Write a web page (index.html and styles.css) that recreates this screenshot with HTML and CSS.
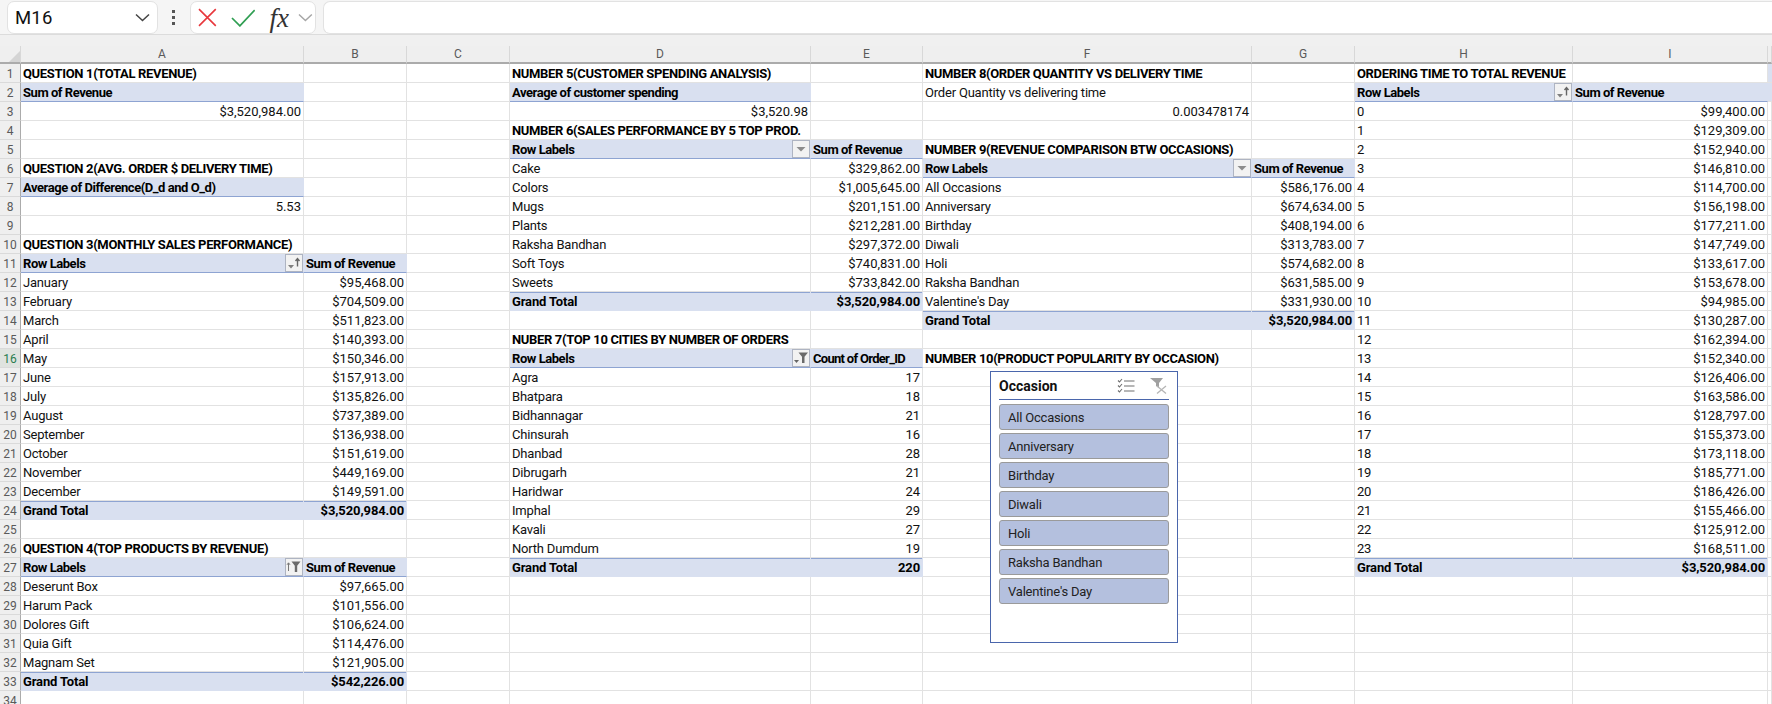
FILE: index.html
```html
<!DOCTYPE html>
<html lang="en">
<head>
    <meta charset="UTF-8">
    <title>Book1 - Excel</title>
    <link rel="stylesheet" href="styles.css">
</head>
<body>
    <svg class="sprites" width="0" height="0">
        <symbol id="i-sort" viewBox="0 0 18 18">
            <path d="M3 11h6l-3 3.5z" fill="#7f7f7f"/>
            <path d="M12.500 12.500V5M10.500 7l2-2.500 2 2.500" fill="none" stroke="#666" stroke-width="1.400"/>
        </symbol>
        <symbol id="i-sortup" viewBox="0 0 18 18">
            <path d="M3.500 13V5M2 6.800l1.500-2 1.500 2" fill="none" stroke="#777" stroke-width="1"/>
            <path d="M6.500 3.500h9l-3.300 4.200v6.300h-2.400V7.700z" fill="#6a6a6a"/>
        </symbol>
        <symbol id="i-filter" viewBox="0 0 18 18">
            <path d="M2 11h5l-2.500 3z" fill="#666"/>
            <path d="M6.500 3.500h9.500l-3.500 4.200v6.300h-2.500V7.700z" fill="#6a6a6a"/>
        </symbol>
        <symbol id="i-drop" viewBox="0 0 18 18">
            <path d="M4.500 7h9l-4.500 4.500z" fill="#8c8c8c"/>
        </symbol>
    </svg>

    <div class="toolbar">
        <div class="namebox">
            <span>M16</span>
            <svg width="15" height="9" viewBox="0 0 15 9"><path d="M1 1.500l6.500 6 6.500-6" fill="none" stroke="#444" stroke-width="1.500"/></svg>
        </div>
        <div class="dots"><i></i><i></i><i></i></div>
        <div class="fxbox">
            <svg width="19" height="19" viewBox="0 0 19 19"><path d="M1 1l17 17M18 1L1 18" stroke="#e8383d" stroke-width="1.600" fill="none"/></svg>
            <svg width="25" height="18" viewBox="0 0 25 18"><path d="M1 9l8 8L24 1" stroke="#2f9e52" stroke-width="1.700" fill="none"/></svg>
            <span class="fx">fx</span>
            <svg width="15" height="9" viewBox="0 0 15 9"><path d="M1 1.500l6.500 6 6.500-6" fill="none" stroke="#a6a6a6" stroke-width="1.500"/></svg>
        </div>
        <div class="formula"></div>
    </div>
    <div class="band"></div>

    <div class="sheet">
        <table class="grid">
            <colgroup>
                <col class="c-rh"><col class="c-a"><col class="c-b"><col class="c-c"><col class="c-d"><col class="c-e"><col class="c-f"><col class="c-g"><col class="c-h"><col class="c-i"><col class="c-j">
            </colgroup>
            <thead>
                <tr><th class="corner"><svg width="12" height="12" viewBox="0 0 12 12"><path d="M12 1v11H1z" fill="#d4d4d4"/></svg></th><th>A</th><th>B</th><th>C</th><th>D</th><th>E</th><th>F</th><th>G</th><th>H</th><th>I</th><th></th></tr>
            </thead>
            <tbody>
                <tr><th>1</th><td class="b">QUESTION 1(TOTAL REVENUE)</td><td></td><td></td><td class="b">NUMBER 5(CUSTOMER SPENDING ANALYSIS)</td><td></td><td class="b">NUMBER 8(ORDER QUANTITY VS DELIVERY TIME</td><td></td><td class="b">ORDERING TIME TO TOTAL REVENUE</td><td></td><td class="edge"></td></tr>
                <tr><th>2</th><td class="hd">Sum of Revenue</td><td></td><td></td><td class="hd">Average of customer spending</td><td></td><td>Order Quantity vs delivering time</td><td></td><td class="hd"><span class="pbtn"><svg width="18" height="18"><use href="#i-sort"/></svg></span>Row Labels</td><td class="hd">Sum of Revenue</td><td class="edge"></td></tr>
                <tr><th>3</th><td class="r">$3,520,984.00</td><td></td><td></td><td class="r">$3,520.98</td><td></td><td class="r">0.003478174</td><td></td><td>0</td><td class="r">$99,400.00</td><td></td></tr>
                <tr><th>4</th><td></td><td></td><td></td><td class="b">NUMBER 6(SALES PERFORMANCE BY 5 TOP PROD.</td><td></td><td></td><td></td><td>1</td><td class="r">$129,309.00</td><td></td></tr>
                <tr><th>5</th><td></td><td></td><td></td><td class="hd"><span class="pbtn"><svg width="18" height="18"><use href="#i-drop"/></svg></span>Row Labels</td><td class="hd">Sum of Revenue</td><td class="b">NUMBER 9(REVENUE COMPARISON BTW OCCASIONS)</td><td></td><td>2</td><td class="r">$152,940.00</td><td></td></tr>
                <tr><th>6</th><td class="b">QUESTION 2(AVG. ORDER $ DELIVERY TIME)</td><td></td><td></td><td>Cake</td><td class="r">$329,862.00</td><td class="hd"><span class="pbtn"><svg width="18" height="18"><use href="#i-drop"/></svg></span>Row Labels</td><td class="hd">Sum of Revenue</td><td>3</td><td class="r">$146,810.00</td><td></td></tr>
                <tr><th>7</th><td class="hd">Average of Difference(D_d and O_d)</td><td></td><td></td><td>Colors</td><td class="r">$1,005,645.00</td><td>All Occasions</td><td class="r">$586,176.00</td><td>4</td><td class="r">$114,700.00</td><td></td></tr>
                <tr><th>8</th><td class="r">5.53</td><td></td><td></td><td>Mugs</td><td class="r">$201,151.00</td><td>Anniversary</td><td class="r">$674,634.00</td><td>5</td><td class="r">$156,198.00</td><td></td></tr>
                <tr><th>9</th><td></td><td></td><td></td><td>Plants</td><td class="r">$212,281.00</td><td>Birthday</td><td class="r">$408,194.00</td><td>6</td><td class="r">$177,211.00</td><td></td></tr>
                <tr><th>10</th><td class="b">QUESTION 3(MONTHLY SALES PERFORMANCE)</td><td></td><td></td><td>Raksha Bandhan</td><td class="r">$297,372.00</td><td>Diwali</td><td class="r">$313,783.00</td><td>7</td><td class="r">$147,749.00</td><td></td></tr>
                <tr><th>11</th><td class="hd"><span class="pbtn"><svg width="18" height="18"><use href="#i-sort"/></svg></span>Row Labels</td><td class="hd">Sum of Revenue</td><td></td><td>Soft Toys</td><td class="r">$740,831.00</td><td>Holi</td><td class="r">$574,682.00</td><td>8</td><td class="r">$133,617.00</td><td></td></tr>
                <tr><th>12</th><td>January</td><td class="r">$95,468.00</td><td></td><td>Sweets</td><td class="r">$733,842.00</td><td>Raksha Bandhan</td><td class="r">$631,585.00</td><td>9</td><td class="r">$153,678.00</td><td></td></tr>
                <tr><th>13</th><td>February</td><td class="r">$704,509.00</td><td></td><td class="tot">Grand Total</td><td class="tot r">$3,520,984.00</td><td>Valentine's Day</td><td class="r">$331,930.00</td><td>10</td><td class="r">$94,985.00</td><td></td></tr>
                <tr><th>14</th><td>March</td><td class="r">$511,823.00</td><td></td><td></td><td></td><td class="tot">Grand Total</td><td class="tot r">$3,520,984.00</td><td>11</td><td class="r">$130,287.00</td><td></td></tr>
                <tr><th>15</th><td>April</td><td class="r">$140,393.00</td><td></td><td class="b">NUBER 7(TOP 10 CITIES BY NUMBER OF ORDERS</td><td></td><td></td><td></td><td>12</td><td class="r">$162,394.00</td><td></td></tr>
                <tr><th class="active">16</th><td>May</td><td class="r">$150,346.00</td><td></td><td class="hd"><span class="pbtn"><svg width="18" height="18"><use href="#i-filter"/></svg></span>Row Labels</td><td class="hd narrow">Count of Order_ID</td><td class="b">NUMBER 10(PRODUCT POPULARITY BY OCCASION)</td><td></td><td>13</td><td class="r">$152,340.00</td><td></td></tr>
                <tr><th>17</th><td>June</td><td class="r">$157,913.00</td><td></td><td>Agra</td><td class="r">17</td><td></td><td></td><td>14</td><td class="r">$126,406.00</td><td></td></tr>
                <tr><th>18</th><td>July</td><td class="r">$135,826.00</td><td></td><td>Bhatpara</td><td class="r">18</td><td></td><td></td><td>15</td><td class="r">$163,586.00</td><td></td></tr>
                <tr><th>19</th><td>August</td><td class="r">$737,389.00</td><td></td><td>Bidhannagar</td><td class="r">21</td><td></td><td></td><td>16</td><td class="r">$128,797.00</td><td></td></tr>
                <tr><th>20</th><td>September</td><td class="r">$136,938.00</td><td></td><td>Chinsurah</td><td class="r">16</td><td></td><td></td><td>17</td><td class="r">$155,373.00</td><td></td></tr>
                <tr><th>21</th><td>October</td><td class="r">$151,619.00</td><td></td><td>Dhanbad</td><td class="r">28</td><td></td><td></td><td>18</td><td class="r">$173,118.00</td><td></td></tr>
                <tr><th>22</th><td>November</td><td class="r">$449,169.00</td><td></td><td>Dibrugarh</td><td class="r">21</td><td></td><td></td><td>19</td><td class="r">$185,771.00</td><td></td></tr>
                <tr><th>23</th><td>December</td><td class="r">$149,591.00</td><td></td><td>Haridwar</td><td class="r">24</td><td></td><td></td><td>20</td><td class="r">$186,426.00</td><td></td></tr>
                <tr><th>24</th><td class="tot">Grand Total</td><td class="tot r">$3,520,984.00</td><td></td><td>Imphal</td><td class="r">29</td><td></td><td></td><td>21</td><td class="r">$155,466.00</td><td></td></tr>
                <tr><th>25</th><td></td><td></td><td></td><td>Kavali</td><td class="r">27</td><td></td><td></td><td>22</td><td class="r">$125,912.00</td><td></td></tr>
                <tr><th>26</th><td class="b">QUESTION 4(TOP PRODUCTS BY REVENUE)</td><td></td><td></td><td>North Dumdum</td><td class="r">19</td><td></td><td></td><td>23</td><td class="r">$168,511.00</td><td></td></tr>
                <tr><th>27</th><td class="hd"><span class="pbtn"><svg width="18" height="18"><use href="#i-sortup"/></svg></span>Row Labels</td><td class="hd">Sum of Revenue</td><td></td><td class="tot">Grand Total</td><td class="tot r">220</td><td></td><td></td><td class="tot">Grand Total</td><td class="tot r">$3,520,984.00</td><td></td></tr>
                <tr><th>28</th><td>Deserunt Box</td><td class="r">$97,665.00</td><td></td><td></td><td></td><td></td><td></td><td></td><td></td><td></td></tr>
                <tr><th>29</th><td>Harum Pack</td><td class="r">$101,556.00</td><td></td><td></td><td></td><td></td><td></td><td></td><td></td><td></td></tr>
                <tr><th>30</th><td>Dolores Gift</td><td class="r">$106,624.00</td><td></td><td></td><td></td><td></td><td></td><td></td><td></td><td></td></tr>
                <tr><th>31</th><td>Quia Gift</td><td class="r">$114,476.00</td><td></td><td></td><td></td><td></td><td></td><td></td><td></td><td></td></tr>
                <tr><th>32</th><td>Magnam Set</td><td class="r">$121,905.00</td><td></td><td></td><td></td><td></td><td></td><td></td><td></td><td></td></tr>
                <tr><th>33</th><td class="tot">Grand Total</td><td class="tot r">$542,226.00</td><td></td><td></td><td></td><td></td><td></td><td></td><td></td><td></td></tr>
                <tr><th>34</th><td></td><td></td><td></td><td></td><td></td><td></td><td></td><td></td><td></td><td></td></tr>
            </tbody>
        </table>

        <div class="slicer">
            <div class="slicer-head">
                <span class="slicer-title">Occasion</span>
                <svg width="18" height="16" viewBox="0 0 18 16"><path d="M1 2.500l1.500 1.500L5 1M1 7.500L2.500 9 5 6M1 12.500L2.500 14 5 11" fill="none" stroke="#6e6e6e" stroke-width="1.100"/><path d="M7 3h10.500M7 8h10.500M7 13h10.500" stroke="#6e6e6e" stroke-width="1.100"/></svg>
                <svg width="17" height="17" viewBox="0 0 17 17"><path d="M0 1h13L9 6v5L6 9V6z" fill="#a0a0a0"/><path d="M7 9l9 7.500M16 9l-9 7.500" stroke="#b5b5b5" stroke-width="1.300"/></svg>
            </div>
            <div class="slicer-list">
                <div class="slicer-item">All Occasions</div>
                <div class="slicer-item">Anniversary</div>
                <div class="slicer-item">Birthday</div>
                <div class="slicer-item">Diwali</div>
                <div class="slicer-item">Holi</div>
                <div class="slicer-item">Raksha Bandhan</div>
                <div class="slicer-item">Valentine's Day</div>
            </div>
        </div>
    </div>
</body>
</html>
```
FILE: styles.css
```css
html, body {
    margin: 0;
    height: 704px;
    overflow: hidden;
    background: #fff;
    font-family: Roboto, "Liberation Sans", sans-serif;
    font-size: 13px;
    color: #111;
}

.sprites { position: absolute; }

/* formula bar */
.toolbar {
    display: flex;
    align-items: stretch;
    height: 33px;
    padding: 1px 0 0 7px;
    background: #f5f5f5;
}
.namebox {
    width: 151px;
    margin-right: 8px;
    padding: 0 7px 0 7px;
    box-sizing: border-box;
    display: flex;
    align-items: center;
    justify-content: space-between;
    background: #fff;
    border: 1px solid #e2e2e2;
    border-radius: 7px;
    font-size: 18.5px;
    letter-spacing: 0.2px;
}
.dots {
    width: 14px;
    margin-right: 10px;
    display: flex;
    flex-direction: column;
    align-items: center;
    justify-content: center;
    gap: 3px;
}
.dots i {
    width: 3px;
    height: 3px;
    background: #555;
}
.fxbox {
    width: 126px;
    margin-right: 7px;
    padding: 0 2px 0 7px;
    box-sizing: border-box;
    display: flex;
    align-items: center;
    gap: 14px;
    background: #fff;
    border: 1px solid #e2e2e2;
    border-radius: 7px;
}
.fx {
    width: 22px;
    font-family: "Liberation Serif", serif;
    font-style: italic;
    font-size: 27px;
    line-height: 28px;
    color: #333;
    margin-right: -7px;
    letter-spacing: 0;
}
.formula {
    flex: 1;
    background: #fff;
    border: 1px solid #e2e2e2;
    border-right: none;
    border-radius: 7px 0 0 7px;
}
.band {
    height: 11px;
    background: #f0f0f0;
    border-top: 1px solid #dcdcdc;
}

/* sheet */
.sheet { position: relative; }
.grid {
    table-layout: fixed;
    width: 1772px;
    border-collapse: separate;
    border-spacing: 0;
}
.c-rh { width: 21px; }
.c-a { width: 283px; }
.c-b { width: 103px; }
.c-c { width: 103px; }
.c-d { width: 301px; }
.c-e { width: 112px; }
.c-f { width: 329px; }
.c-g { width: 103px; }
.c-h { width: 218px; }
.c-i { width: 195px; }
.c-j { width: 4px; }

.grid th {
    padding: 0;
    background: #efefef;
    color: #5a5a5a;
    font-weight: 400;
    font-size: 12px;
    text-align: center;
    border-right: 1px solid #c6c6c6;
    border-bottom: 1px solid #dadada;
}
.grid thead th {
    height: 18px;
    line-height: 16px;
    border-right-color: #d8d8d8;
    border-bottom: 2px solid #ababab;
    box-sizing: border-box;
}
.grid tbody th {
    height: 19px;
    padding-top: 2px;
    line-height: 16px;
    box-sizing: border-box;
    border-right: 1px solid #ababab;
    white-space: nowrap;
    overflow: hidden;
}
.grid th.active {
    background: #dfe3df;
    color: #2a7d4f;
}
.grid th.corner { vertical-align: bottom; text-align: right; line-height: 0; }

.grid td {
    height: 19px;
    padding: 2px 2px 0;
    box-sizing: border-box;
    line-height: 16px;
    white-space: nowrap;
    overflow: visible;
    letter-spacing: -0.2px;
    border-right: 1px solid #e2e2e2;
    border-bottom: 1px solid #e2e2e2;
}
.grid td.r { text-align: right; letter-spacing: 0; }
.grid td.b { font-weight: 700; color: #000; letter-spacing: -0.34px; }
.grid td.hd {
    font-weight: 700;
    color: #000;
    letter-spacing: -0.45px;
    background: #d9e0f0;
    border-right-color: #d9e0f0;
    border-bottom-color: #8ea4d2;
}
.grid td.narrow { letter-spacing: -0.7px; }
.grid td.tot {
    font-weight: 700;
    color: #000;
    letter-spacing: -0.15px;
    background: #d9e0f0;
    border-right-color: #d9e0f0;
    border-bottom-color: #d9e0f0;
    box-shadow: inset 0 1px 0 #8ea4d2;
}
.grid td.tot.r { letter-spacing: -0.1px; }
.grid td.edge { background: #d9e0f0; border-right: none; }

.pbtn {
    float: right;
    width: 18px;
    height: 18px;
    margin: -2px -2px 0 0;
    box-sizing: border-box;
    background: #f2f2f2;
    border: 1px solid #aeb4c2;
    line-height: 0;
}
.pbtn svg { margin: -1px; }

/* slicer sits on top of the grid */
.slicer {
    position: absolute;
    left: 990px;
    top: 325px;
    width: 188px;
    height: 272px;
    box-sizing: border-box;
    padding: 0 8px;
    background: #fff;
    border: 1px solid #4a66ac;
}
.slicer-head {
    height: 27px;
    display: flex;
    align-items: center;
    border-bottom: 1px solid #4a66ac;
    gap: 15px;
    padding-right: 2px;
}
.slicer-title {
    flex: 1;
    font-weight: 700;
    font-size: 14px;
    color: #111;
}
.slicer-list {
    display: flex;
    flex-direction: column;
    gap: 3px;
    margin-top: 4px;
}
.slicer-item {
    height: 26px;
    line-height: 25px;
    box-sizing: border-box;
    padding-left: 8px;
    background: #b4c0de;
    border: 1px solid #9a9a9a;
    border-radius: 3px;
    color: #222;
    letter-spacing: -0.2px;
}
```
